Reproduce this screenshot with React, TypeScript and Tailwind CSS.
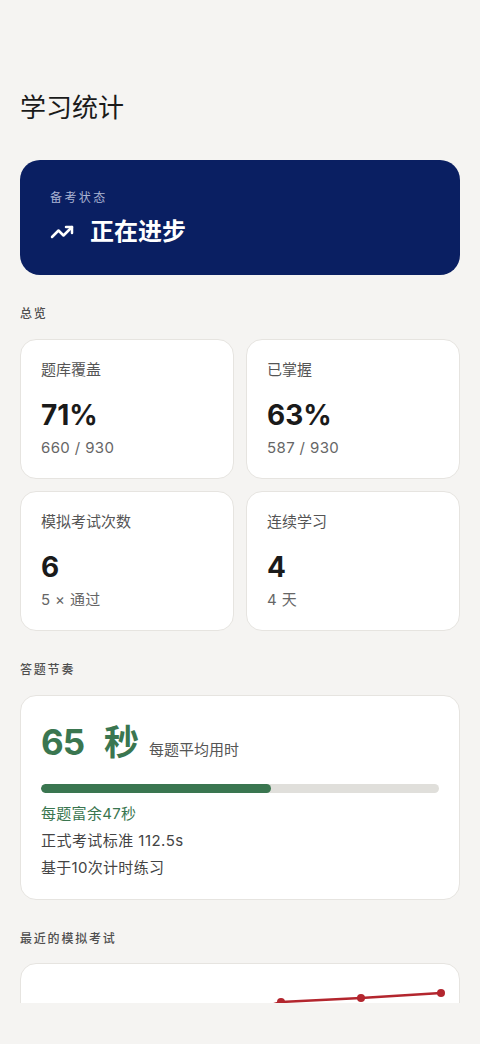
import { TrendingUp } from "lucide-react";

const font = { fontFamily: 'Inter, "Noto Sans CJK SC", sans-serif' };

function StatCard({ label, value, sub }: { label: string; value: string; sub: string }) {
  return (
    <div className="h-[140px] rounded-2xl border border-[#e6e4e0] bg-white px-5 pt-5">
      <div className="text-[15px] leading-5 text-[#555]">{label}</div>
      <div className="mt-[18px] text-[28px] font-bold leading-[34px] text-[#1a1a1a]">{value}</div>
      <div className="mt-1.5 text-[15px] leading-5 tracking-wide text-[#666]">{sub}</div>
    </div>
  );
}

function SectionLabel({ children }: { children: string }) {
  return <div className="text-[12px] font-medium leading-4 tracking-[0.15em] text-[#4f4f4f]">{children}</div>;
}

const points = [
  [20, 96],
  [100, 78],
  [180, 62],
  [260, 38],
  [340, 34],
  [420, 29],
];

export default function App() {
  return (
    <div className="flex h-[1044px] flex-col bg-[#f5f4f2]" style={font}>
      <div className="flex-1 overflow-hidden px-5">
        <h1 className="pt-[90px] text-[26px] leading-9 text-[#1a1a1a]">学习统计</h1>

        <div className="mt-[34px] h-[115px] rounded-[20px] bg-[#0a1f62] px-[30px] pt-[30px]">
          <div className="text-[12px] leading-4 tracking-[0.2em] text-[#aab4d3]">备考状态</div>
          <div className="mt-2.5 flex items-center gap-4">
            <TrendingUp className="h-[24px] w-[24px] text-white" strokeWidth={2.5} />
            <span className="text-[24px] font-bold leading-8 text-white">正在进步</span>
          </div>
        </div>

        <div className="mt-[31px]">
          <SectionLabel>总览</SectionLabel>
        </div>
        <div className="mt-[17px] grid grid-cols-2 gap-3">
          <StatCard label="题库覆盖" value="71%" sub="660 / 930" />
          <StatCard label="已掌握" value="63%" sub="587 / 930" />
          <StatCard label="模拟考试次数" value="6" sub="5 × 通过" />
          <StatCard label="连续学习" value="4" sub="4 天" />
        </div>

        <div className="mt-[31px]">
          <SectionLabel>答题节奏</SectionLabel>
        </div>
        <div className="mt-[17px] rounded-2xl border border-[#e6e4e0] bg-white px-5 pb-[21px] pt-6">
          <div className="flex items-baseline">
            <span className="text-[35px] font-bold leading-[44px] tracking-[-0.03em] text-[#3a7650]">65</span>
            <span className="ml-[20px] text-[35px] font-bold leading-[44px] text-[#3a7650]">秒</span>
            <span className="ml-[10px] text-[15px] leading-5 text-[#555]">每题平均用时</span>
          </div>
          <div className="mt-5 h-[9px] overflow-hidden rounded-full bg-[#e0dfdb]">
            <div className="h-full rounded-full bg-[#3a7650]" style={{ width: `${(65 / 112.5) * 100}%` }} />
          </div>
          <div className="mt-[11px] text-[15px] leading-5 tracking-[0.02em] text-[#3a7650]">每题富余47秒</div>
          <div className="mt-[7px] text-[15px] leading-5 tracking-[0.03em] text-[#444]">正式考试标准 112.5s</div>
          <div className="mt-[7px] text-[15px] leading-5 tracking-[0.02em] text-[#444]">基于10次计时练习</div>
        </div>

        <div className="mt-[31px]">
          <SectionLabel>最近的模拟考试</SectionLabel>
        </div>
        <div className="mt-4 h-[200px] rounded-2xl border border-[#e6e4e0] bg-white">
          <svg width="440" height="200" viewBox="0 0 440 200" className="block">
            <polyline
              points={points.map((p) => p.join(",")).join(" ")}
              fill="none"
              stroke="#b3262e"
              strokeWidth="2.5"
              strokeLinejoin="round"
            />
            {points.map(([x, y]) => (
              <circle key={x} cx={x} cy={y} r="4" fill="#b3262e" />
            ))}
          </svg>
        </div>
      </div>
      <div className="h-[41px] bg-[#f5f4f2]" />
    </div>
  );
}
